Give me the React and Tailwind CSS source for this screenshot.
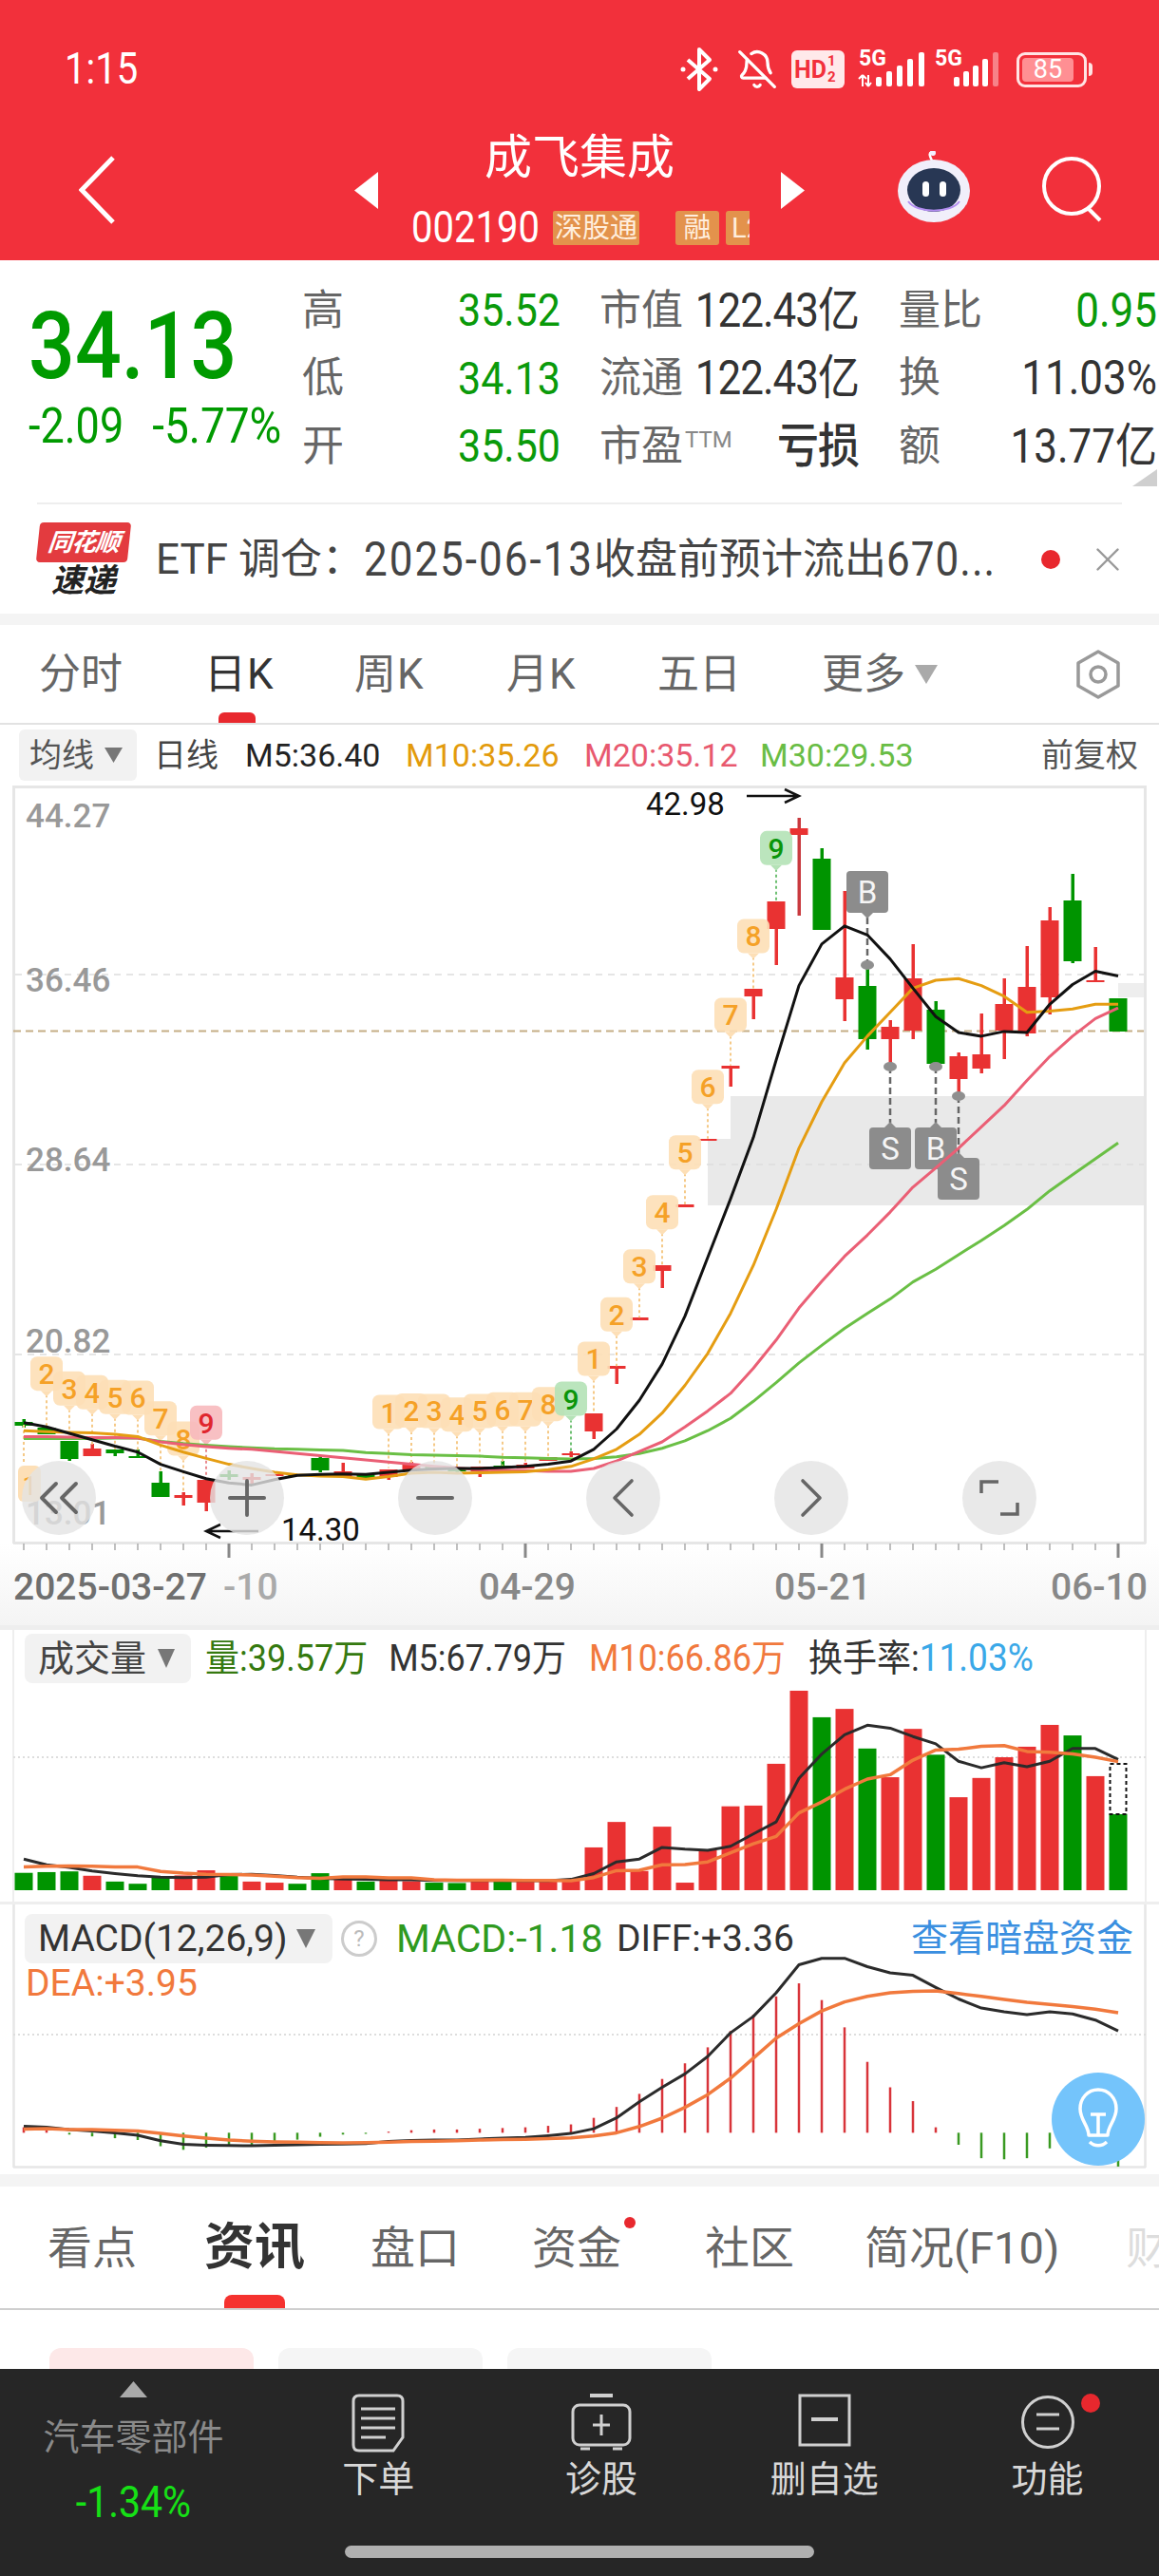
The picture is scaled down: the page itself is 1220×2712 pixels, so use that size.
import { BellOff, ChevronLeft, ChevronRight, ChevronsLeft, Minus, Plus, X } from "lucide-react";

const px = (i) => 25 + 24 * i;
// chart y readings are taken from the crops, these map them to page y
const cy = (z) => 830 + z / 1.782;
const vy = (z) => 1700 + z / 2.613;

const RED = "#e93232";
const GREEN = "#009400";

const candles = [
  ["g", 1497, 1501, 1494, 1503], ["g", 1503, 1510, 1503, 1510], ["g", 1517, 1536, 1517, 1538], ["r", 1525, 1533, 1520, 1533],
  ["g", 1526, 1530, 1526, 1533], ["g", 1533, 1535, 1526, 1535], ["g", 1561, 1576, 1549, 1576], ["r", 1574, 1577, 1571, 1585],
  ["r", 1558, 1582, 1558, 1591], ["g", 1552, 1555, 1548, 1558], ["r", 1555, 1558, 1551, 1562], ["r", 1552, 1554, 1552, 1554],
  ["g", 1552, 1554, 1552, 1554], ["g", 1535, 1548, 1532, 1550], ["r", 1549, 1554, 1540, 1554], ["g", 1553, 1556, 1553, 1556],
  ["r", 1547, 1555, 1547, 1558], ["r", 1541, 1547, 1539, 1547], ["g", 1544, 1547, 1544, 1547], ["g", 1547, 1549, 1547, 1551],
  ["r", 1544, 1549, 1544, 1555], ["g", 1543, 1546, 1538, 1546], ["r", 1542, 1546, 1540, 1546], ["r", 1534, 1538, 1534, 1538],
  ["r", 1530, 1532, 1528, 1534], ["r", 1488, 1507, 1488, 1515], ["r", 1438, 1441, 1438, 1457], ["r", 1387, 1390, 1387, 1390],
  ["r", 1332, 1338, 1332, 1356], ["r", 1268, 1271, 1268, 1271], ["r", 1199, 1201, 1199, 1201], ["r", 1122, 1125, 1122, 1144],
  ["r", 1041, 1049, 1041, 1073], ["r", 949, 978, 949, 1016], ["r", 872, 879, 861, 964], ["g", 904, 979, 893, 979],
  ["r", 1029, 1052, 938, 1075], ["g", 1038, 1094, 1015, 1105], ["r", 1081, 1094, 1074, 1122], ["r", 1030, 1085, 994, 1094],
  ["g", 1063, 1120, 1054, 1127], ["r", 1112, 1136, 1108, 1154], ["r", 1110, 1125, 1067, 1130], ["r", 1057, 1085, 1030, 1115],
  ["r", 1039, 1088, 996, 1091], ["r", 969, 1050, 955, 1068], ["g", 948, 1012, 920, 1014], ["r", 1032, 1034, 997, 1034],
  ["g", 1051, 1086, 1051, 1086],
];

const ma5 = [1190, 1198, 1210, 1222, 1234, 1245, 1268, 1282, 1295, 1303, 1307, 1297, 1289, 1287, 1286, 1287, 1283, 1279, 1277, 1276, 1276, 1274, 1272, 1268, 1262, 1240, 1202, 1148, 1080, 990, 880, 770, 655, 510, 370, 292, 258, 275, 320, 375, 428, 458, 465, 456, 458, 405, 368, 343, 352];
const ma10 = [1205, 1207, 1208, 1209, 1212, 1216, 1232, 1245, 1257, 1268, 1276, 1283, 1288, 1290, 1291, 1296, 1291, 1285, 1283, 1285, 1284, 1283, 1282, 1278, 1272, 1258, 1240, 1212, 1172, 1120, 1060, 985, 895, 790, 675, 588, 515, 465, 420, 375, 360, 357, 370, 390, 420, 418, 414, 405, 405];
const ma20 = [1216, 1216, 1217, 1218, 1218, 1219, 1226, 1231, 1235, 1238, 1240, 1244, 1248, 1252, 1256, 1260, 1264, 1268, 1272, 1275, 1278, 1279, 1280, 1281, 1281, 1276, 1262, 1244, 1226, 1198, 1168, 1135, 1088, 1035, 975, 925, 878, 838, 795, 748, 712, 675, 635, 595, 548, 503, 465, 432, 412];
const ma30 = [1220, 1220, 1220, 1220, 1219, 1219, 1225, 1229, 1232, 1235, 1237, 1239, 1240, 1241, 1242, 1246, 1248, 1250, 1251, 1252, 1253, 1255, 1256, 1257, 1258, 1257, 1254, 1248, 1238, 1224, 1205, 1182, 1150, 1115, 1078, 1045, 1013, 985, 958, 926, 902, 875, 848, 820, 790, 755, 725, 695, 665];

// [candle index, label centre, dotted line end, digit, kind]
const nineLabels = [
  [1, 1098, 1200, 2, "o"], [2, 1126, 1215, 3, "o"], [3, 1133, 1235, 4, "o"], [4, 1142, 1240, 5, "o"], [5, 1143, 1245, 6, "o"],
  [6, 1182, 1282, 7, "o"], [7, 1220, 1320, 8, "o"], [8, 1190, 1297, 9, "r"],
  [16, 1170, 1275, 1, "o"], [17, 1167, 1268, 2, "o"], [18, 1168, 1270, 3, "o"], [19, 1175, 1275, 4, "o"], [20, 1168, 1272, 5, "o"],
  [21, 1165, 1270, 6, "o"], [22, 1165, 1268, 7, "o"], [23, 1155, 1255, 8, "o"], [24, 1145, 1247, 9, "g"],
  [25, 1070, 1172, 1, "o"], [26, 987, 1084, 2, "o"], [27, 897, 993, 3, "o"], [28, 795, 895, 4, "o"], [29, 683, 780, 5, "o"],
  [30, 560, 657, 6, "o"], [31, 425, 520, 7, "o"], [32, 277, 376, 8, "o"], [33, 112, 212, 9, "g"],
];
const labelStyle = {
  o: { bg: "#fddfb6", fg: "#f5a127", line: "#f5c987" },
  r: { bg: "#f7b9bd", fg: "#e0262e", line: "#e98a8e" },
  g: { bg: "#b4e2b6", fg: "#0a950a", line: "#6fc073" },
};

const volumes = [
  ["g", 710], ["g", 708], ["g", 706], ["r", 718], ["g", 734], ["g", 740], ["g", 720], ["r", 717], ["r", 703], ["g", 718],
  ["r", 734], ["r", 737], ["g", 740], ["g", 711], ["r", 725], ["g", 734], ["r", 730], ["r", 733], ["g", 737], ["g", 738],
  ["r", 733], ["g", 732], ["r", 733], ["r", 730], ["r", 730], ["r", 640], ["r", 570], ["r", 705], ["r", 583], ["r", 737],
  ["r", 647], ["r", 527], ["r", 525], ["r", 410], ["r", 209], ["g", 282], ["r", 259], ["g", 368], ["r", 447], ["r", 314],
  ["g", 385], ["r", 502], ["r", 449], ["r", 392], ["r", 363], ["r", 303], ["g", 332], ["r", 444], ["g", 548],
];
const volBlack = [672, 688, 695, 705, 712, 718, 722, 723, 722, 715, 714, 717, 722, 725, 727, 728, 729, 729, 731, 731, 731, 731, 732, 732, 728, 712, 680, 672, 640, 645, 648, 637, 603, 570, 450, 383, 330, 304, 312, 335, 355, 403, 421, 407, 418, 403, 368, 368, 398];
const volOrange = [694, 692, 691, 692, 694, 694, 706, 711, 714, 715, 716, 719, 723, 725, 721, 721, 724, 724, 729, 730, 730, 730, 731, 731, 732, 723, 704, 703, 688, 687, 680, 655, 630, 610, 545, 515, 480, 452, 440, 400, 372, 370, 362, 360, 376, 378, 383, 392, 404];

const macdBars = [1410, 1415, 1430, 1435, 1440, 1445, 1462, 1472, 1466, 1460, 1458, 1452, 1444, 1436, 1430, 1428, 1422, 1418, 1416, 1416, 1414, 1412, 1410, 1406, 1402, 1384, 1354, 1318, 1277, 1234, 1190, 1145, 1100, 1050, 1014, 1060, 1135, 1230, 1300, 1338, 1410, 1458, 1495, 1498, 1495, 1468, 1488, 1490, 1518];
const macdBlack = [1407, 1410, 1416, 1420, 1425, 1432, 1447, 1457, 1459, 1460, 1461, 1459, 1458, 1457, 1456, 1455, 1449, 1446, 1445, 1445, 1442, 1440, 1438, 1433, 1427, 1414, 1384, 1340, 1300, 1263, 1215, 1150, 1105, 1040, 963, 945, 945, 968, 985, 992, 1025, 1057, 1082, 1092, 1100, 1092, 1098, 1115, 1145];
const macdOrange = [1415, 1414, 1416, 1416, 1418, 1420, 1427, 1434, 1440, 1445, 1448, 1450, 1451, 1452, 1453, 1452, 1451, 1449, 1448, 1447, 1445, 1444, 1443, 1441, 1439, 1434, 1425, 1408, 1385, 1355, 1320, 1275, 1220, 1165, 1125, 1090, 1065, 1050, 1040, 1036, 1035, 1042, 1050, 1058, 1066, 1072, 1078, 1085, 1095];

const toPoints = (list, conv) => list.map((z, i) => `${px(i)},${conv(z).toFixed(1)}`).join(" ");

function Tall({ children, className = "" }) {
  return <span className={`inline-block scale-y-[1.14] ${className}`}>{children}</span>;
}

function Tri({ w = 18, h = 24, color = "#888", up = false }) {
  return (
    <svg width={w} height={h} viewBox="0 0 18 24" preserveAspectRatio="none" className="shrink-0">
      <path d={up ? "M9 0L18 24H0Z" : "M0 0H18L9 24Z"} fill={color} />
    </svg>
  );
}

function Signal({ arrows, faded }) {
  return (
    <div className="relative w-[74px] h-[40px]">
      <span className="absolute left-[2px] top-[-3px] text-[23px] font-bold leading-none text-white">5G</span>
      <svg width="74" height="40" className="absolute left-0 top-0">
        {arrows && <path d="M6 38V26M6 26l-4 4M6 26l4 4M12 26v12M12 38l-3-4M12 38l3-4" stroke="#fff" strokeWidth="2" fill="none" />}
        <rect x={arrows ? 20 : 22} y="28" width="6" height="10" rx="2" fill="#fff" />
        <rect x={arrows ? 31 : 32} y="22" width="6" height="16" rx="2" fill="#fff" />
        <rect x={arrows ? 42 : 42} y="16" width="6" height="22" rx="2" fill="#fff" />
        <rect x={arrows ? 53 : 52} y="9" width="6" height="29" rx="2" fill="#fff" />
        <rect x={arrows ? 65 : 63} y="2" width="6" height="36" rx="2" fill="#fff" fillOpacity={faded ? 0.4 : 1} />
      </svg>
    </div>
  );
}

function StatusBar() {
  return (
    <div className="h-[135px] pt-[11px] flex items-center text-white">
      <Tall className="ml-[68px] text-[40px] leading-none">1:15</Tall>
      <div className="ml-auto mr-[70px] flex items-center">
        <svg width="44" height="48" viewBox="0 0 44 48" fill="none" stroke="#fff" strokeWidth="4" strokeLinejoin="round">
          <path d="M10 14L33 34L22 45V3L33 14L10 34" />
          <circle cx="5" cy="24" r="2.5" fill="#fff" stroke="none" />
          <circle cx="39" cy="24" r="2.5" fill="#fff" stroke="none" />
        </svg>
        <BellOff size={44} strokeWidth={1.8} className="ml-[17px]" />
        <div className="ml-[14px] w-[56px] h-[40px] bg-[#ffe9ea] rounded-[6px] flex items-center pl-[3px] text-[#f2303b]">
          <span className="text-[25px] font-bold leading-none">HD</span>
          <span className="ml-[1px] flex flex-col text-[15px] font-bold leading-[17px]">
            <span>1</span>
            <span>2</span>
          </span>
        </div>
        <div className="ml-[13px]">
          <Signal arrows />
        </div>
        <div className="ml-[6px]">
          <Signal faded />
        </div>
        <div className="ml-[14px] w-[74px] h-[37px] rounded-[9px] border-[3px] border-[#ffe4e4] p-[3px]">
          <div className="w-[54px] h-full rounded-[4px] bg-[#ff8f93] flex items-center justify-center text-[27px] leading-none">85</div>
        </div>
        <div className="ml-[2px] w-[4px] h-[14px] rounded-r bg-[#ffe4e4]" />
      </div>
    </div>
  );
}

function NavRow() {
  return (
    <div className="h-[130px] flex items-center text-white">
      <svg width="38" height="72" viewBox="0 0 38 72" fill="none" stroke="#fff" strokeWidth="5" className="ml-[83px]">
        <path d="M36 2L3 36L36 70" />
      </svg>
      <svg width="25" height="39" className="ml-[252px]">
        <path d="M25 0V39L0 19.5Z" fill="#fff" />
      </svg>
      <div className="w-[424px] h-full">
        <div className="h-[62px] flex items-center justify-center text-[50px] leading-none">成飞集成</div>
        <div className="mt-[25px] pl-[35px] flex items-center h-[36px]">
          <Tall className="text-[40px] leading-none">002190</Tall>
          <span className="ml-[14px] h-[36px] w-[91px] bg-[#e3924c] rounded-[2px] text-[29px] leading-[36px] text-center text-[#ffeedd]">深股通</span>
          <span className="ml-[38px] h-[36px] w-[46px] bg-[#e3924c] rounded-[3px] text-[29px] leading-[36px] text-center text-[#ffeedd]">融</span>
          <span className="ml-[7px] h-[36px] w-[25px] bg-[#e3924c] rounded-l-[3px] text-[29px] leading-[36px] pl-[6px] text-[#ffeedd] overflow-hidden whitespace-nowrap">L2</span>
        </div>
      </div>
      <svg width="25" height="39">
        <path d="M0 0V39L25 19.5Z" fill="#fff" />
      </svg>
      <svg width="80" height="76" viewBox="0 0 80 76" className="ml-[96px] mt-[-6px]">
        <path d="M38 10C36 6 34 2 38 1" stroke="#fff" strokeWidth="2.5" fill="none" />
        <circle cx="39" cy="2" r="3" fill="#f3f0ff" />
        <ellipse cx="40" cy="42" rx="38" ry="33" fill="#f1effa" />
        <ellipse cx="40" cy="41" rx="28" ry="23" fill="#283754" />
        <path d="M13 53C22 66 58 66 67 53" stroke="#b28df0" strokeWidth="2" fill="none" />
        <rect x="28" y="32" width="7" height="16" rx="3.5" fill="#fff" />
        <rect x="46" y="32" width="7" height="16" rx="3.5" fill="#fff" />
      </svg>
      <svg width="66" height="70" viewBox="0 0 66 70" fill="none" stroke="#fff" strokeWidth="4" className="ml-[73px] mt-[-2px]">
        <circle cx="32" cy="32" r="29" />
        <path d="M50 56L62 68" />
      </svg>
    </div>
  );
}

function Quote() {
  const rows = [
    ["高", "35.52", "市值", "122.43亿", "量比", "0.95", true],
    ["低", "34.13", "流通", "122.43亿", "换", "11.03%", false],
    ["开", "35.50", "市盈", "亏损", "额", "13.77亿", false],
  ];
  return (
    <div className="relative h-[255px] flex">
      <div className="w-[318px] pl-[30px] pt-[41px] text-[#009a00]">
        <Tall className="text-[86px] leading-[100px] font-medium">34.13</Tall>
        <div className="mt-[8px] h-[50px] flex items-center">
          <Tall className="text-[45px] leading-none">-2.09</Tall>
          <Tall className="ml-[30px] text-[46px] leading-none">-5.77%</Tall>
        </div>
      </div>
      <div className="flex-1 pt-[17px]">
        {rows.map((r) => (
          <div key={r[0]} className="h-[71.5px] flex items-center text-[44px] leading-none text-[#666]">
            <span className="w-[44px]">{r[0]}</span>
            <Tall className="w-[228px] text-right text-[#0a9a0a] text-[43px]">{r[1]}</Tall>
            <span className="ml-[41px] w-[100px] whitespace-nowrap">
              {r[2]}
              {r[2] === "市盈" && <span className="ml-[2px] align-[14px] text-[24px] text-[#888]">TTM</span>}
            </span>
            <Tall className={`w-[173px] text-right text-[#333] tracking-[-1px] whitespace-nowrap ${r[3] === "亏损" ? "font-medium" : ""}`}>{r[3]}</Tall>
            <span className="ml-[42px] w-[94px]">{r[4]}</span>
            <Tall className={`w-[178px] text-right whitespace-nowrap ${r[6] ? "text-[#0a9a0a]" : "text-[#333]"}`}>{r[5]}</Tall>
          </div>
        ))}
      </div>
      <svg width="26" height="18" className="absolute right-[2px] bottom-[17px]">
        <path d="M26 0V18H0Z" fill="#cfcfcf" />
      </svg>
    </div>
  );
}

function NewsTicker() {
  return (
    <div className="h-[117px] flex items-center border-t-2 border-[#eee] mx-[39px] relative">
      <div className="w-[96px] ml-[1px] shrink-0 flex flex-col items-center">
        <div className="relative w-[96px] h-[42px] bg-[#e33b3f] rounded-[4px] -skew-x-6 flex items-center justify-center">
          <span className="text-[26px] leading-none italic font-bold text-white tracking-[-1px] whitespace-nowrap">同花顺</span>
        </div>
        <span className="mt-[2px] text-[34px] leading-[34px] font-bold italic text-[#222] whitespace-nowrap">速递</span>
      </div>
      <div className="ml-[28px] w-[904px] shrink-0 flex items-center text-[44px] leading-none text-[#444] whitespace-nowrap">
        <span>ETF 调仓：</span>
        <Tall className="tracking-[2px]">2025-06-13</Tall>
        <span>收盘前预计流出</span>
        <Tall className="tracking-[1px]">670...</Tall>
      </div>
      <div className="ml-[28px] w-[20px] h-[20px] rounded-full bg-[#e8282e] shrink-0" />
      <X size={42} strokeWidth={1.4} className="ml-[29px] shrink-0 text-[#999]" />
    </div>
  );
}

function PeriodTabs() {
  return (
    <div className="relative h-[105px] border-b-2 border-[#e2e2e2] flex items-center pl-[41px] text-[44px] leading-none text-[#666]">
      <span className="w-[174px]">分时</span>
      <span className="w-[158px] text-[#333] tracking-[1px]">日K</span>
      <span className="w-[160px] tracking-[1px]">周K</span>
      <span className="w-[159px] tracking-[1px]">月K</span>
      <span className="w-[173px]">五日</span>
      <span className="w-[98px]">更多</span>
      <Tri w={24} h={20} color="#aaa" />
      <svg width="52" height="52" viewBox="0 0 52 52" fill="none" stroke="#999" strokeWidth="3.5" className="ml-[143px]">
        <path d="M26 2L47 14V38L26 50L5 38V14Z" strokeLinejoin="round" />
        <circle cx="26" cy="26" r="8" />
      </svg>
      <div className="absolute left-[230px] bottom-0 w-[39px] h-[11px] rounded-t-[6px] bg-[#e8282e]" />
    </div>
  );
}

function MaLegend() {
  return (
    <div className="h-[64px] flex items-center text-[34px] leading-none text-[#333] whitespace-nowrap">
      <div className="ml-[20px] w-[124px] h-[54px] rounded-[6px] bg-[#f2f2f2] flex items-center pl-[11px]">
        <span className="text-[#555]">均线</span>
        <span className="ml-[11px]">
          <Tri w={19} h={16} color="#777" />
        </span>
      </div>
      <span className="ml-[18px] w-[96px] text-[#444]">日线</span>
      <span className="w-[169px] text-[#222]">M5:36.40</span>
      <span className="w-[188px] text-[#e39b0c]">M10:35.26</span>
      <span className="w-[185px] text-[#e8596f]">M20:35.12</span>
      <span className="text-[#69bd45]">M30:29.53</span>
      <span className="ml-auto mr-[22px] text-[#555]">前复权</span>
    </div>
  );
}

function BsMark({ x, top, lineFrom, lineTo, up, letter }) {
  return (
    <g>
      <line x1={x} x2={x} y1={lineFrom} y2={lineTo} stroke="#666" strokeWidth="2.5" strokeDasharray="7 4" />
      <ellipse cx={x} cy={up ? lineFrom : lineTo} rx="7" ry="5" fill="#8f8f8f" />
      <rect x={x - 22} y={top} width="44" height="44" rx="4" fill="#8c8c8c" />
      <path d={up ? `M${x - 6} ${top}L${x} ${top - 6}L${x + 6} ${top}Z` : `M${x - 6} ${top + 44}L${x} ${top + 50}L${x + 6} ${top + 44}Z`} fill="#8c8c8c" />
      <text x={x} y={top + 34} textAnchor="middle" fontSize="33" fill="#f5f5f5">{letter}</text>
    </g>
  );
}

function KChart() {
  const axis = [["44.27", 871], ["36.46", 1044], ["28.64", 1233], ["20.82", 1424], ["13.01", 1605]];
  const buttons = [[ChevronsLeft, 72, 1.3], [Plus, 62, 1.5], [Minus, 62, 1.5], [ChevronLeft, 72, 1.2], [ChevronRight, 72, 1.2]];
  return (
    <div className="relative h-[884px]">
      <svg width="1220" height="884" viewBox="0 827 1220 884" className="block">
        <defs>
          <linearGradient id="axisFade" x1="0" y1="0" x2="0" y2="1">
            <stop offset="0" stopColor="#fff" />
            <stop offset="1" stopColor="#f4f4f4" />
          </linearGradient>
        </defs>
        <rect x="0" y="1625" width="1220" height="86" fill="url(#axisFade)" />
        <path d="M769 1154H1206V1269H745V1199H769Z" fill="#e9e9e9" />
        <rect x="1177" y="1035" width="29" height="15" fill="#eee" />
        <path d="M14 828.5H1206M14.5 827V1625M1205.5 827V1625M14 1624.5H1206" stroke="#e6e6e6" strokeWidth="3" fill="none" />
        {[1026, 1226, 1426].map((y) => (
          <line key={y} x1="16" x2="1204" y1={y} y2={y} stroke="#ddd" strokeWidth="1.5" strokeDasharray="7 6" />
        ))}
        <line x1="14" x2="1204" y1="1085.5" y2="1085.5" stroke="#c5ae86" strokeWidth="2" strokeDasharray="8 5" />
        {axis.map(([t, y]) => (
          <text key={t} x="27" y={y} fontSize="35" fontWeight="500" fill="#999">{t}</text>
        ))}
        {candles.map(([c, top, bot, wt, wb], i) => (
          <g key={i} fill={c === "r" ? RED : GREEN}>
            <rect x={px(i) - 1.5} y={wt} width="3.5" height={wb - wt} fill={i === 34 ? "#c93a3f" : undefined} />
            <rect x={px(i) - 9.5} y={top} width="19" height={Math.max(bot - top, 2)} />
          </g>
        ))}
        <line x1={px(0)} x2={px(0)} y1="1500" y2="1540" stroke="#f5c987" strokeWidth="2" strokeDasharray="3 3" />
        <g>
          <rect x="19" y="1543" width="24" height="38" rx="6" fill="#fddfb6" />
          <text x="31" y="1574" textAnchor="middle" fontSize="27" fill="#f5a127">1</text>
        </g>
        {nineLabels.map(([i, z, end, n, kind]) => {
          const s = labelStyle[kind];
          const c = cy(z);
          return (
            <g key={`${i}-${n}`}>
              <line x1={px(i)} x2={px(i)} y1={c + 22} y2={cy(end)} stroke={s.line} strokeWidth="2" strokeDasharray="3 3" />
              <rect x={px(i) - 17} y={c - 18} width="34" height="36" rx="7" fill={s.bg} fillOpacity="0.9" />
              <path d={`M${px(i) - 6} ${c + 18}L${px(i)} ${c + 24}L${px(i) + 6} ${c + 18}Z`} fill={s.bg} />
              <text x={px(i)} y={c + 11} textAnchor="middle" fontSize="30" fontWeight="500" fill={s.fg}>{n}</text>
            </g>
          );
        })}
        <BsMark x={913} top={917} lineFrom={966} lineTo={1016} letter="B" />
        <BsMark x={937} top={1187} lineFrom={1123} lineTo={1182} up letter="S" />
        <BsMark x={985} top={1187} lineFrom={1123} lineTo={1182} up letter="B" />
        <BsMark x={1009} top={1219} lineFrom={1154} lineTo={1214} up letter="S" />
        <polyline points={toPoints(ma30, cy)} fill="none" stroke="#6abf45" strokeWidth="3" strokeLinejoin="round" />
        <polyline points={toPoints(ma20, cy)} fill="none" stroke="#ea5f75" strokeWidth="3" strokeLinejoin="round" />
        <polyline points={toPoints(ma10, cy)} fill="none" stroke="#e59d12" strokeWidth="3" strokeLinejoin="round" />
        <polyline points={toPoints(ma5, cy)} fill="none" stroke="#111" strokeWidth="3" strokeLinejoin="round" />
        <text x="680" y="858" fontSize="33" fill="#111">42.98</text>
        <path d="M786 838H841M826 831L841 838L826 845" stroke="#111" strokeWidth="2.5" fill="none" />
        <text x="296" y="1622" fontSize="33" fill="#111">14.30</text>
        <path d="M272 1612H217M232 1605L217 1612L232 1619" stroke="#111" strokeWidth="2.5" fill="none" />
        {candles.map((_, i) => (
          <line key={i} x1={px(i)} x2={px(i)} y1="1625" y2={(i - 9) % 13 === 0 ? 1640 : 1632} stroke={(i - 9) % 13 === 0 ? "#888" : "#aaa"} strokeWidth={(i - 9) % 13 === 0 ? 3 : 1.5} />
        ))}
        <g fontSize="39" fontWeight="500" fill="#888">
          <text x="14" y="1684" fill="#6f6f6f">2025-03-27</text>
          <text x="235" y="1684" fill="#aaa">-10</text>
          <text x="504" y="1684">04-29</text>
          <text x="815" y="1684">05-21</text>
          <text x="1106" y="1684">06-10</text>
        </g>
      </svg>
      <div className="absolute left-[23px] top-[711px] flex gap-[120px] text-[#666]">
        {buttons.map(([Icon, size, sw], i) => (
          <div key={i} className="w-[78px] h-[78px] rounded-full bg-[#e4e4e4]/80 flex items-center justify-center">
            <Icon size={size} strokeWidth={sw} className="shrink-0" />
          </div>
        ))}
        <div className="w-[78px] h-[78px] rounded-full bg-[#e4e4e4]/80 flex items-center justify-center">
          <svg width="42" height="42" viewBox="0 0 42 42" fill="none" stroke="#666" strokeWidth="3.5">
            <path d="M2 16V4H20M40 26V38H22" />
          </svg>
        </div>
      </div>
    </div>
  );
}

function VolumePanel() {
  return (
    <div className="relative h-[291px] border-t-[5px] border-[#eee]">
      <div className="absolute inset-y-0 left-[13px] w-[1194px] border-x-2 border-[#eee]" />
      <div className="relative h-[59px] flex items-center text-[36px] leading-none whitespace-nowrap">
        <div className="ml-[26px] w-[175px] h-[52px] rounded-[8px] bg-[#f2f2f2] flex items-center pl-[14px] text-[38px] text-[#444]">
          成交量
          <span className="ml-[12px]">
            <Tri w={18} h={20} color="#777" />
          </span>
        </div>
        <span className="ml-[15px] scale-y-[1.08] text-[#35790f]">量:39.57万</span>
        <span className="ml-[22px] scale-y-[1.08] text-[#333]">M5:67.79万</span>
        <span className="ml-[24px] scale-y-[1.08] text-[#f1793d]">M10:66.86万</span>
        <span className="ml-[24px] scale-y-[1.08] text-[#333]">换手率:</span>
        <span className="scale-y-[1.08] text-[#3aa8e8] text-[37px]">11.03%</span>
      </div>
      <svg width="1220" height="227" viewBox="0 1775 1220 227" className="relative block">
        <line x1="14" x2="1206" y1="1850" y2="1850" stroke="#ddd" strokeWidth="2" strokeDasharray="2 3" />
        {volumes.map(([c, z], i) => (
          <rect key={i} x={px(i) - 9.5} y={vy(z)} width="19" height={1990 - vy(z)} fill={c === "r" ? RED : GREEN} />
        ))}
        <rect x="1168.5" y="1857" width="17" height="53" fill="#fff" stroke="#111" strokeWidth="2" strokeDasharray="4 3" />
        <polyline points={toPoints(volBlack, vy)} fill="none" stroke="#2b2b2b" strokeWidth="3" strokeLinejoin="round" />
        <polyline points={toPoints(volOrange, vy)} fill="none" stroke="#f1793d" strokeWidth="3.5" strokeLinejoin="round" />
      </svg>
    </div>
  );
}

function MacdPanel() {
  return (
    <div className="relative h-[287px] border-t-[3px] border-[#eee]">
      <svg width="1220" height="284" viewBox="0 2005 1220 284" className="block">
        <path d="M14.5 2005V2282M1205.5 2005V2282M14 2281.5H1206" stroke="#e6e6e6" strokeWidth="2.5" fill="none" />
        <line x1="14" x2="1206" y1="2142" y2="2142" stroke="#ddd" strokeWidth="2" strokeDasharray="2 3" />
        {macdBars.map((z, i) => (
          <line key={i} x1={px(i)} x2={px(i)} y1={vy(1425)} y2={vy(z)} stroke={z > 1425 ? "#3a9a22" : "#d8343a"} strokeWidth="2.5" />
        ))}
        <polyline points={toPoints(macdBlack, vy)} fill="none" stroke="#2b2b2b" strokeWidth="3" strokeLinejoin="round" />
        <polyline points={toPoints(macdOrange, vy)} fill="none" stroke="#f1793d" strokeWidth="3.5" strokeLinejoin="round" />
      </svg>
      <div className="absolute left-[26px] top-[10px] right-[27px] flex items-center text-[39px] leading-none whitespace-nowrap">
        <div className="w-[324px] h-[52px] rounded-[8px] bg-[#f2f2f2] flex items-center pl-[14px] text-[#333]">
          MACD(12,26,9)
          <span className="ml-[10px]">
            <Tri w={20} h={20} color="#777" />
          </span>
        </div>
        <div className="ml-[9px] w-[38px] h-[38px] rounded-full border-[3px] border-[#ccc] flex items-center justify-center text-[24px] text-[#bbb]">?</div>
        <span className="ml-[20px] w-[232px] text-[#2f9a1f] text-[41px]">MACD:-1.18</span>
        <span className="text-[#333]">DIFF:+3.36</span>
        <span className="ml-auto text-[#3a8fe0]">查看暗盘资金</span>
      </div>
      <span className="absolute left-[27px] top-[63px] text-[39px] leading-[40px] text-[#f1793d]">DEA:+3.95</span>
      <div className="absolute left-[1107px] top-[177px] w-[98px] h-[98px] rounded-full bg-[#74c4fb] flex items-center justify-center">
        <svg width="44" height="66" viewBox="0 0 44 66" fill="none" stroke="#fff" strokeWidth="3.5" strokeLinejoin="round">
          <path d="M12 50C12 40 3 34 3 22C3 11 11 2 22 2C33 2 41 11 41 22C41 34 32 40 32 50Z" />
          <path d="M14 28H30M22 28V50M13 57C18 62 26 62 31 57" />
        </svg>
      </div>
    </div>
  );
}

function DetailTabs() {
  return (
    <div className="relative h-[130px] border-b-2 border-[#cfcfcf] flex items-center text-[47px] leading-none text-[#666] whitespace-nowrap overflow-hidden">
      <span className="ml-[50px]">看点</span>
      <span className="ml-[71px] text-[53px] font-bold text-[#333]">资讯</span>
      <span className="ml-[69px]">盘口</span>
      <span className="ml-[76px]">资金</span>
      <span className="ml-[88px]">社区</span>
      <span className="ml-[74px]">简况(F10)</span>
      <span className="ml-[70px] text-[#ddd]">财务</span>
      <div className="absolute left-[657px] top-[32px] w-[12px] h-[12px] rounded-full bg-[#e8282e]" />
      <div className="absolute left-[236px] bottom-0 w-[64px] h-[14px] rounded-t-[8px] bg-[#f5322f]" />
    </div>
  );
}

function BottomBar() {
  const iconColor = "#d0d0d0";
  const actions = [
    {
      label: "下单",
      icon: (
        <svg width="56" height="62" viewBox="0 0 56 62" fill="none" stroke={iconColor} strokeWidth="3">
          <path d="M8 2H48Q54 2 54 8V46L44 60H8Q2 60 2 54V8Q2 2 8 2Z" />
          <path d="M10 16H46M10 26H46M10 36H46M10 46H36" />
        </svg>
      ),
    },
    {
      label: "诊股",
      icon: (
        <svg width="64" height="62" viewBox="0 0 64 62" fill="none" stroke={iconColor} strokeWidth="3">
          <path d="M20 2H44" strokeWidth="4" />
          <rect x="2" y="12" width="60" height="42" rx="7" />
          <path d="M32 22V44M23 33H41M10 58H20M44 58H54" />
        </svg>
      ),
    },
    {
      label: "删自选",
      icon: (
        <svg width="56" height="58" viewBox="0 0 56 58" fill="none" stroke={iconColor} strokeWidth="3">
          <rect x="2" y="2" width="52" height="52" />
          <path d="M14 27H42" strokeWidth="4" />
        </svg>
      ),
    },
    {
      label: "功能",
      icon: (
        <svg width="58" height="60" viewBox="0 0 58 60" fill="none" stroke={iconColor} strokeWidth="3">
          <circle cx="29" cy="30" r="26.5" />
          <path d="M17 22H41M17 37H41" />
        </svg>
      ),
    },
  ];
  return (
    <div className="h-[218px] bg-[#262626]">
      <div className="h-[186px] flex">
        <div className="w-[281px] flex flex-col items-center pt-[13px]">
          <Tri w={29} h={17} color="#aaa" up />
          <span className="mt-[20px] text-[38px] leading-[44px] text-[#8a8a8a]">汽车零部件</span>
          <Tall className="mt-[24px] text-[41px] leading-[44px] text-[#16e016]">-1.34%</Tall>
        </div>
        {actions.map((a) => (
          <div key={a.label} className="relative flex-1 flex flex-col items-center pt-[26px]">
            <div className="h-[62px] flex items-start justify-center">{a.icon}</div>
            <span className="mt-[6px] text-[38px] leading-[44px] text-[#d8d8d8]">{a.label}</span>
            {a.label === "功能" && <div className="absolute left-[153px] top-[26px] w-[20px] h-[20px] rounded-full bg-[#e8282e]" />}
          </div>
        ))}
      </div>
      <div className="mx-auto w-[494px] h-[13px] rounded-full bg-[#b0b0b0]" />
    </div>
  );
}

export default function App() {
  return (
    <div className="w-[1220px] h-[2712px] overflow-hidden bg-white [font-family:Roboto,'Noto_Sans_CJK_SC',sans-serif]">
      <div className="h-[274px] bg-[#f2303b] overflow-hidden">
        <StatusBar />
        <NavRow />
      </div>
      <Quote />
      <NewsTicker />
      <div className="h-[12px] bg-[#f4f4f4]" />
      <PeriodTabs />
      <MaLegend />
      <KChart />
      <VolumePanel />
      <MacdPanel />
      <div className="h-[13px] bg-[#f4f4f4]" />
      <DetailTabs />
      <div className="h-[62px] flex items-end gap-[26px] pl-[52px]">
        <div className="w-[215px] h-[22px] rounded-t-[12px] bg-[#fde8e8]" />
        <div className="w-[215px] h-[22px] rounded-t-[12px] bg-[#f5f5f5]" />
        <div className="w-[215px] h-[22px] rounded-t-[12px] bg-[#f5f5f5]" />
      </div>
      <BottomBar />
    </div>
  );
}
